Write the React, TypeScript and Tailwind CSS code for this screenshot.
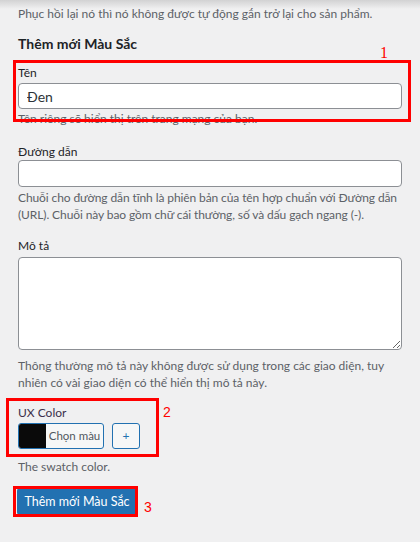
import React from "react";

export default function App() {
  const font = { fontFamily: 'Lato, "Liberation Sans", sans-serif' };
  return (
    <div
      className="relative w-[420px] h-[542px] overflow-hidden bg-[#f0f0f1] text-[12px] text-[#1d2327]"
      style={font}
    >
      <div className="pointer-events-none absolute left-0 top-0 h-[9px] w-full bg-gradient-to-b from-[#d2d2d3] to-[#f0f0f1]" />
      <div className="relative px-[18px]">
        <p className="pt-[5px] leading-[17px] text-[#5c6167]">
          Phục hồi lại nó thì nó không được tự động gắn trở lại cho sản phẩm.
        </p>
        <h2 className="mt-[12px] text-[14px] font-bold leading-[20px] text-[#1d2327]">
          Thêm mới Màu Sắc
        </h2>

        {/* Tên */}
        <div className="relative mt-[10px]">
          <label className="block leading-[17px]">Tên</label>
          <input
            readOnly
            value="Đen"
            className="mt-[2px] block h-[26px] w-full rounded-[4px] border border-[#8c8f94] bg-white px-[8px] text-[14px] text-[#2c3338] outline-none"
          />
          <p className="mt-[1px] leading-[17px] text-[#5c6167]">Tên riêng sẽ hiển thị trên trang mạng của bạn.</p>
          <div className="pointer-events-none absolute left-[-5px] top-[-4px] h-[62px] w-[398px] border-[3px] border-[#ff0000]" />
          <span
            className="pointer-events-none absolute left-[362px] top-[-19px] text-[16px] leading-none text-[#ff0000]"
            style={{ fontFamily: '"Liberation Serif", serif' }}
          >
            1
          </span>
        </div>

        {/* Đường dẫn */}
        <div className="mt-[16px]">
          <label className="block leading-[17px]">Đường dẫn</label>
          <input
            readOnly
            value=""
            className="block h-[27px] w-full rounded-[4px] border border-[#8c8f94] bg-white px-[8px] text-[14px] outline-none"
          />
          <p className="mt-[2px] leading-[17px] tracking-[-0.1px] text-[#5c6167]">
            Chuỗi cho đường dẫn tĩnh là phiên bản của tên hợp chuẩn với Đường dẫn (URL). Chuỗi này bao gồm chữ cái thường, số và dấu gạch ngang (-).
          </p>
        </div>

        {/* Mô tả */}
        <div className="mt-[14px]">
          <label className="block leading-[17px]">Mô tả</label>
          <textarea
            readOnly
            className="mt-[3px] block h-[93px] w-full resize-y rounded-[4px] border border-[#8c8f94] bg-white outline-none"
          />
          <p className="mt-[7px] leading-[17px] text-[#5c6167]">
            Thông thường mô tả này không được sử dụng trong các giao diện, tuy nhiên có vài giao diện có thể hiển thị mô tả này.
          </p>
        </div>

        {/* UX Color */}
        <div className="relative mt-[13px]">
          <label className="block leading-[17px] text-[#3c2f4a]">UX Color</label>
          <div className="mt-[2px] flex gap-[8px]">
            <div className="flex h-[26px] w-[86px] overflow-hidden rounded-[3px] border border-[#2271b1] bg-[#f6f7f7]">
              <div className="h-full w-[27px] bg-[#0a0a0a]" />
              <div className="flex flex-1 items-center justify-center text-[11.5px] text-[#50575e]">Chọn màu</div>
            </div>
            <div className="flex h-[26px] w-[28px] items-center justify-center rounded-[3px] border border-[#2271b1] bg-[#f6f7f7] text-[12px] text-[#2271b1]">
              +
            </div>
          </div>
          <div className="pointer-events-none absolute left-[-12px] top-[-6px] h-[59px] w-[153px] border-[3px] border-[#ff0000]" />
          <span
            className="pointer-events-none absolute left-[145px] top-[1px] text-[14px] leading-none text-[#ff0000]"
            style={{ fontFamily: '"Liberation Sans", sans-serif' }}
          >
            2
          </span>
          <p className="mt-[9px] leading-[17px] text-[#5c6167]">The swatch color.</p>
        </div>

        {/* Submit */}
        <div className="relative mt-[13px] w-[120px]">
          <button className="ml-[-1px] h-[27px] w-[120px] rounded-[3px] bg-[#2271b1] text-[12.5px] leading-[27px] text-white">
            Thêm mới Màu Sắc
          </button>
          <div className="pointer-events-none absolute left-[-5px] top-[-2px] h-[31px] w-[125px] border-[3px] border-[#ff0000]" />
          <span
            className="pointer-events-none absolute left-[126px] top-[12px] text-[14px] leading-none text-[#ff0000]"
            style={{ fontFamily: '"Liberation Sans", sans-serif' }}
          >
            3
          </span>
        </div>
      </div>
    </div>
  );
}
